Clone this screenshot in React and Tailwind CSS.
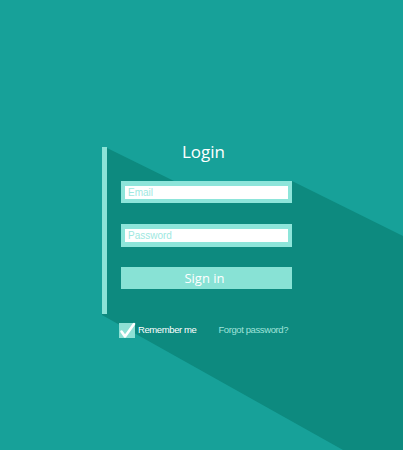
import React from "react";

export default function App() {
  return (
    <div className="relative h-[450px] w-full overflow-hidden bg-[#17a199]">
      <svg className="absolute inset-0" width="403" height="450" viewBox="0 0 403 450">
        <polygon
          points="105,147 174,181 292,181 403,236 403,450 343,450 102,315"
          fill="#0d8a7f"
        />
      </svg>
      <div className="relative pt-[147px] pl-[102px]">
        <div className="flex">
          <div className="w-[5px] h-[167px] bg-[#8be3d7]" />
          <div className="ml-[14px] w-[171px] flex flex-col">
            <div
              className="-mt-[5px] h-[39px] text-center text-[17px] leading-[20px] text-white"
              style={{ fontFamily: '"Open Sans", sans-serif' }}
            >
              <span className="relative -left-[3px]">Login</span>
            </div>
            <div className="h-[22px] bg-[#8de5da] pt-[5px] pb-[4px] px-[4px]">
              <div
                className="h-[13px] bg-white pl-[3px] text-[10px] leading-[13px] text-[#9ee8df]"
                style={{ fontFamily: '"Liberation Sans", Arial, sans-serif' }}
              >
                Email
              </div>
            </div>
            <div className="mt-[21px] h-[23px] bg-[#8de5da] pt-[5px] pb-[5px] px-[4px]">
              <div
                className="h-[13px] bg-white pl-[3px] text-[10px] leading-[13px] text-[#9ee8df]"
                style={{ fontFamily: '"Liberation Sans", Arial, sans-serif' }}
              >
                Password
              </div>
            </div>
            <div
              className="mt-[20px] h-[22px] bg-[#88e2d5] text-center text-[13px] leading-[22px] text-white"
              style={{ fontFamily: '"Open Sans", sans-serif' }}
            >
              <span className="relative -left-[2px]">Sign in</span>
            </div>
          </div>
        </div>
        <div
          className="mt-[9px] ml-[17px] flex items-center text-[9.5px] tracking-[-0.4px]"
          style={{ fontFamily: '"Liberation Sans", Arial, sans-serif' }}
        >
          <div className="relative w-[16px] h-[15px] bg-[#8ee0d5]">
            <svg className="absolute left-0 top-0 overflow-visible" width="16" height="15" viewBox="0 0 16 15">
              <path d="M2.5 8.5 L6 13.5 L15 1" fill="none" stroke="#ffffff" strokeWidth="2.6" strokeLinecap="round" strokeLinejoin="round" />
            </svg>
          </div>
          <span className="ml-[3px] text-white">Remember me</span>
          <span className="ml-[22px] text-[#9fe3da]">Forgot password?</span>
        </div>
      </div>
    </div>
  );
}
